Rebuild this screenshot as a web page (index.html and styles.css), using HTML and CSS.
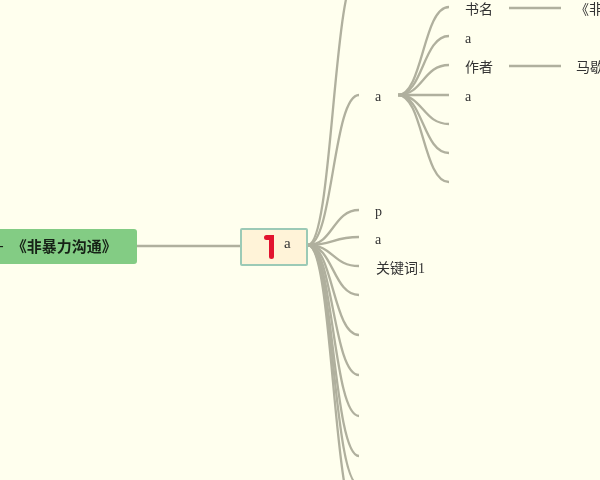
FILE: index.html
```html
<!DOCTYPE html>
<html lang="zh">
<head>
<meta charset="utf-8">
<title>Mind map</title>
<link rel="stylesheet" href="styles.css">
</head>
<body>
<main class="canvas">
<svg class="links" width="600" height="480" viewBox="0 0 600 480" fill="none">
<g class="line">
<path d="M137 246H240"/>
<path d="M308 245C333 245 333 -30 359 -30"/>
<path d="M308 245C333 245 333 95 359 95"/>
<path d="M308 245C333 245 333 210 359 210"/>
<path d="M308 245C333 245 333 237 359 237"/>
<path d="M308 245C333 245 333 266 359 266"/>
<path d="M308 245C333 245 333 295 359 295"/>
<path d="M308 245C333 245 333 335 359 335"/>
<path d="M308 245C333 245 333 375 359 375"/>
<path d="M308 245C333 245 333 416 359 416"/>
<path d="M308 245C333 245 333 456 359 456"/>
<path d="M308 245C333 245 333 485 359 485"/>
<path d="M308 245C333 245 333 522 359 522"/>
<path d="M398 95C423 95 423 7 449 7"/>
<path d="M398 95C423 95 423 36 449 36"/>
<path d="M398 95C423 95 423 65 449 65"/>
<path d="M398 95H449"/>
<path d="M398 95C423 95 423 124 449 124"/>
<path d="M398 95C423 95 423 153 449 153"/>
<path d="M398 95C423 95 423 182 449 182"/>
<path d="M509 8H561"/>
<path d="M509 66H561"/>
</g>
</svg>
<div class="node root"><span class="dash">-</span><span>《非暴力沟通》</span></div>
<div class="node main"><svg class="mark" width="16" height="26" viewBox="0 0 16 26" fill="none"><path d="M3.500 3.500H8.500V22.500"/></svg><span class="main-label">a</span></div>
<span class="node t" style="left:375px;top:88px">a</span>
<span class="node t" style="left:375px;top:203px">p</span>
<span class="node t" style="left:375px;top:231px">a</span>
<span class="node t" style="left:376px;top:260px">关键词1</span>
<span class="node t" style="left:465px;top:1px">书名</span>
<span class="node t" style="left:465px;top:30px">a</span>
<span class="node t" style="left:465px;top:59px">作者</span>
<span class="node t" style="left:465px;top:88px">a</span>
<span class="node t" style="left:575px;top:1px">《非暴力沟通》</span>
<span class="node t" style="left:576px;top:59px">马歇尔</span>
</main>
</body>
</html>
```
FILE: styles.css
```css
html, body { margin: 0; padding: 0; }
body { width: 600px; height: 480px; overflow: hidden; background: #ffffee; }
.canvas { position: relative; width: 600px; height: 480px; overflow: hidden; background: #ffffee; font-family: "Liberation Serif", "Noto Sans CJK SC", serif; color: #333; filter: blur(0.35px); }
.links { position: absolute; left: 0; top: 0; }
.line path { stroke: #b0b09e; stroke-width: 2.300; }
.node { position: absolute; white-space: nowrap; }
.t { font-size: 14px; line-height: 18px; }
.root { left: -6px; top: 229px; width: 143px; height: 35px; box-sizing: border-box; display: flex; align-items: center; padding: 0 0 2px 5px; background: #83cc84; border-radius: 3px; font-family: "Liberation Sans", "Noto Sans CJK SC", sans-serif; font-size: 15px; font-weight: bold; color: #162216; }
.dash { font-weight: normal; font-size: 14px; margin-right: 8px; }
.main { left: 240px; top: 228px; width: 68px; height: 38px; box-sizing: border-box; border: 2px solid #9ccab6; border-radius: 2px; background: #fff3d8; display: flex; align-items: center; padding-left: 21px; gap: 5px; font-size: 15px; }
.main-label { margin-bottom: 8px; }
.mark { flex: none; }
.mark path { stroke: #e2132f; stroke-width: 5; stroke-linecap: round; stroke-linejoin: miter; }
```
